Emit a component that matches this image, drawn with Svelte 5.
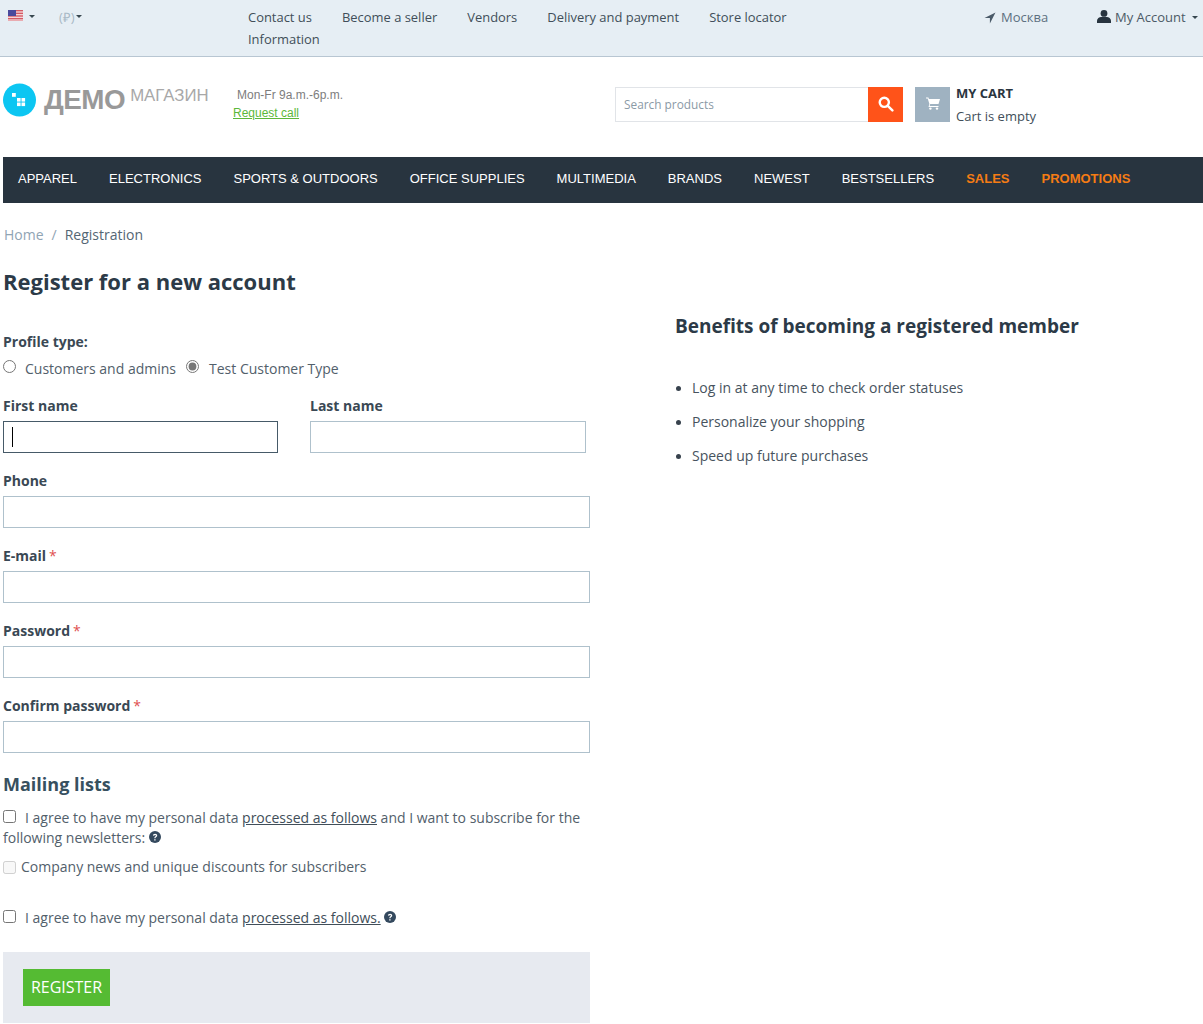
<script>
  const topLinks = ['Contact us', 'Become a seller', 'Vendors', 'Delivery and payment', 'Store locator', 'Information'];
  const nav = ['APPAREL', 'ELECTRONICS', 'SPORTS & OUTDOORS', 'OFFICE SUPPLIES', 'MULTIMEDIA', 'BRANDS', 'NEWEST', 'BESTSELLERS'];
  const navHot = ['SALES', 'PROMOTIONS'];
  const fields = [
    { label: 'Phone', req: false },
    { label: 'E-mail', req: true },
    { label: 'Password', req: true },
    { label: 'Confirm password', req: true }
  ];
  const benefits = ['Log in at any time to check order statuses', 'Personalize your shopping', 'Speed up future purchases'];
  const stripes = [0, 1, 2, 3, 4, 5, 6];
</script>

<div class="page">
  <header class="top">
    <div class="pickers">
      <span class="flag">
        <svg width="15" height="11" viewBox="0 0 15 11">
          <rect width="15" height="11" fill="#fff" />
          {#each stripes as s}<rect y={s * 1.6} width="15" height="0.8" fill="#c8313e" />{/each}
          <rect width="8" height="6" fill="#4a4a9c" />
        </svg>
      </span>
      <i class="caret"></i>
      <span class="currency">(₽)</span>
      <i class="caret small"></i>
    </div>
    <nav class="toplinks">
      {#each topLinks as l}<span>{l}</span>{/each}
    </nav>
    <div class="city">
      <svg width="12" height="12" viewBox="0 0 12 12"><path d="M11.5.5 5.9 11.5V6.1H.5z" fill="#4a5a68" /></svg>
      <span>Москва</span>
    </div>
    <div class="account">
      <svg width="14" height="13" viewBox="0 0 14 13"><circle cx="7" cy="3.4" r="3.4" fill="#28343f" /><path d="M0 13v-2.2C0 8.4 2.4 7 4 7h6c1.6 0 4 1.4 4 3.8V13z" fill="#28343f" /></svg>
      <span>My Account</span>
      <i class="caret"></i>
    </div>
  </header>

  <section class="brand">
    <div class="logo">
      <svg width="34" height="34" viewBox="0 0 34 34">
        <circle cx="16.5" cy="17" r="16.5" fill="#0cc6f2" />
        <rect x="9" y="10" width="3.8" height="3.8" fill="#fff" />
        <rect x="14" y="15" width="3.6" height="3.6" fill="#fff" />
        <rect x="18.5" y="15" width="3.6" height="3.6" fill="#fff" />
        <rect x="14" y="19.5" width="3.6" height="3.6" fill="#fff" />
        <rect x="18.5" y="19.5" width="3.6" height="3.6" fill="#fff" />
      </svg>
      <span class="demo">ДЕМО</span>
      <span class="shop">МАГАЗИН</span>
    </div>
    <div class="hours">
      <span class="time">Mon-Fr 9a.m.-6p.m.</span>
      <a href="#call" class="call">Request call</a>
    </div>
    <div class="search">
      <span class="placeholder">Search products</span>
      <button class="searchbtn" aria-label="Search">
        <svg width="16" height="16" viewBox="0 0 16 16" fill="none" stroke="#fff" stroke-width="2.4"><circle cx="6.3" cy="6.3" r="4.6" /><path d="M9.8 9.8l4.6 4.6" stroke-linecap="round" /></svg>
      </button>
    </div>
    <div class="cart">
      <span class="cartbox">
        <svg width="14" height="13" viewBox="0 0 14 13" fill="#fff">
          <path d="M0 .5h2.4l.5 1.6H14l-1.5 5H4.2L3.7 9h8.8v.9H2.5l.9-3L1.7 1.4H0z" />
          <circle cx="4.4" cy="11.6" r="1.2" /><circle cx="11" cy="11.6" r="1.2" />
        </svg>
      </span>
      <div class="carttext">
        <strong>MY CART</strong>
        <span>Cart is empty</span>
      </div>
    </div>
  </section>

  <nav class="mainnav">
    {#each nav as n}<span>{n}</span>{/each}
    {#each navHot as n}<span class="hot">{n}</span>{/each}
  </nav>

  <div class="crumbs"><span class="home">Home</span><span class="sep">/</span><span>Registration</span></div>

  <h1>Register for a new account</h1>

  <main class="columns">
    <form class="form">
      <div class="label">Profile type:</div>
      <div class="radios">
        <input type="radio" name="pt" />
        <span class="rlabel">Customers and admins</span>
        <input type="radio" name="pt" checked class="second" />
        <span class="rlabel">Test Customer Type</span>
      </div>

      <div class="names">
        <div class="name first">
          <div class="label">First name</div>
          <div class="box focus"><i class="cursor"></i></div>
        </div>
        <div class="name last">
          <div class="label">Last name</div>
          <div class="box"></div>
        </div>
      </div>

      {#each fields as f}
        <div class="field">
          <div class="label">{f.label}{#if f.req}<span class="req">*</span>{/if}</div>
          <div class="box"></div>
        </div>
      {/each}

      <h2>Mailing lists</h2>

      <p class="agree">
        <input type="checkbox" /><span class="t">I agree to have my personal data <u>processed as follows</u> and I want to subscribe for the following newsletters:</span>
        <svg class="help" width="12" height="12" viewBox="0 0 12 12"><circle cx="6" cy="6" r="6" fill="#34495e" /><path d="M3.9 4.6C4 3.4 4.9 2.7 6.1 2.7c1.2 0 2.1.7 2.1 1.8 0 1-.6 1.4-1.2 1.8-.4.3-.5.5-.5.9H5.3c0-.8.2-1.2.8-1.6.5-.3.8-.6.8-1 0-.4-.3-.7-.8-.7s-.9.3-.9.8zM5.2 8.2h1.4v1.3H5.2z" fill="#fff" /></svg>
      </p>
      <p class="news"><input type="checkbox" disabled /><span>Company news and unique discounts for subscribers</span></p>
      <p class="agree two">
        <input type="checkbox" /><span class="t">I agree to have my personal data <u>processed as follows.</u></span>
        <svg class="help" width="12" height="12" viewBox="0 0 12 12"><circle cx="6" cy="6" r="6" fill="#34495e" /><path d="M3.9 4.6C4 3.4 4.9 2.7 6.1 2.7c1.2 0 2.1.7 2.1 1.8 0 1-.6 1.4-1.2 1.8-.4.3-.5.5-.5.9H5.3c0-.8.2-1.2.8-1.6.5-.3.8-.6.8-1 0-.4-.3-.7-.8-.7s-.9.3-.9.8zM5.2 8.2h1.4v1.3H5.2z" fill="#fff" /></svg>
      </p>

      <div class="actions"><button type="button" class="register">REGISTER</button></div>
    </form>

    <aside class="benefits">
      <h3>Benefits of becoming a registered member</h3>
      <ul>
        {#each benefits as b}<li>{b}</li>{/each}
      </ul>
    </aside>
  </main>
</div>

<style>
  :global(body) { margin: 0; background: #fff; }
  .page { font-family: "Open Sans", sans-serif; font-size: 14px; color: #37474f; width: 1203px; overflow: hidden; }

  .top { height: 56px; background: #e6eef4; border-bottom: 1px solid #b8c6d2; display: flex; position: relative; }
  .pickers { width: 248px; display: flex; align-items: flex-start; padding: 10px 0 0 8px; box-sizing: border-box; }
  .flag { display: block; height: 11px; line-height: 0; }
  .caret { display: inline-block; width: 0; height: 0; border-left: 3px solid transparent; border-right: 3px solid transparent; border-top: 3px solid #37474f; margin-top: 5px; margin-left: 6px; }
  .caret.small { margin-left: 1px; margin-top: 5px; }
  .currency { font-size: 13px; color: #a9bac6; margin-left: 24px; line-height: 15px; }
  .toplinks { width: 590px; display: flex; flex-wrap: wrap; column-gap: 30px; font-size: 12.95px; line-height: 22px; padding-top: 6px; color: #414e59; align-content: flex-start; }
  .toplinks span:last-child { flex-basis: 100%; }
  .city { width: 113px; margin-left: 146px; display: flex; gap: 5px; padding-top: 11px; font-size: 13px; line-height: 13px; color: #5d7080; align-items: flex-start; box-sizing: border-box; }
  .city svg { margin-top: 1px; }
  .account { display: flex; gap: 4px; padding-top: 10px; font-size: 13px; line-height: 15px; color: #4c5a66; align-items: flex-start; white-space: nowrap; }
  .account .caret { margin-left: 2px; margin-top: 6px; }

  .brand { display: flex; height: 100px; position: relative; }
  .logo { position: relative; width: 232px; padding: 26px 0 0 3px; box-sizing: border-box; display: flex; align-items: flex-start; }
  .demo { font-family: "Liberation Sans", sans-serif; font-weight: 700; font-size: 27.8px; line-height: 32px; color: #999; margin: 1px 0 0 7px; letter-spacing: -0.5px; }
  .shop { font-family: "Liberation Sans", sans-serif; font-size: 16.8px; line-height: 20px; color: #a8a8a8; margin-left: 5px; margin-top: 3px; white-space: nowrap; }
  .hours { width: 383px; padding-top: 29px; box-sizing: border-box; display: flex; flex-direction: column; font-family: "Liberation Sans", sans-serif; font-size: 12px; line-height: 18px; }
  .time { color: #7d7d7d; margin-left: 5px; }
  .call { color: #5cb83a; text-decoration: underline; margin-left: 1px; }
  .search { margin-top: 30px; width: 288px; height: 35px; box-sizing: border-box; border: 1px solid #e1e4e8; display: flex; align-items: center; justify-content: space-between; position: relative; }
  .placeholder { font-size: 11.85px; color: #8b9aa6; margin: 0 0 2px 8px; }
  .searchbtn { width: 35px; height: 35px; margin: -1px; background: #ff5319; border: 0; padding: 0 0 2px; display: flex; align-items: center; justify-content: center; }
  .cart { display: flex; margin-left: 12px; margin-top: 30px; }
  .cartbox { width: 35px; height: 35px; box-sizing: border-box; padding-bottom: 2px; background: #9fb2c1; display: flex; align-items: center; justify-content: center; }
  .carttext { margin-left: 6px; display: flex; flex-direction: column; font-size: 13px; line-height: 23px; margin-top: -5px; color: #414e59; }
  .carttext strong { font-size: 13px; color: #2a3540; font-weight: 700; }

  .mainnav { margin-left: 3px; height: 46px; box-sizing: border-box; padding: 0 0 3px 15px; background: #28343f; display: flex; align-items: center; gap: 32px; font-family: "Liberation Sans", sans-serif; font-size: 13px; color: #fff; white-space: nowrap; }
  .hot { color: #f57c14; font-weight: 700; }

  .crumbs { display: flex; gap: 8px; margin: 22px 0 0 4px; line-height: 19px; font-size: 14px; color: #546674; }
  .home { color: #90a4b4; }
  .sep { color: #90a4b4; }

  h1 { font-size: 22px; font-weight: 700; line-height: 30px; color: #2c3a47; margin: 22px 0 0 3px; }

  .columns { display: flex; margin-left: 3px; }
  .form { width: 587px; padding-top: 36px; }
  .label { font-size: 14px; font-weight: 700; line-height: 20px; color: #3a4854; }
  .req { color: #e05050; font-weight: 400; margin-left: 3px; }
  .radios { display: flex; align-items: center; margin-top: 6px; height: 20px; color: #52606b; }
  .radios input { margin: 0 9px 3px 0; width: 13px; height: 13px; accent-color: #777; }
  .radios .second { margin: 0 10px 3px 10px; }
  .names { display: flex; gap: 32px; margin-top: 18px; }
  .name.first { width: 275px; }
  .name.last { width: 276px; }
  .box { height: 32px; box-sizing: border-box; border: 1px solid #afc1cc; background: #fff; margin-top: 5px; position: relative; }
  .box.focus { border-color: #465a68; }
  .cursor { position: absolute; left: 8px; top: 5px; width: 1px; height: 20px; background: #000; }
  .field { margin-top: 18px; }
  .field .box { margin-top: 5px; width: 587px; }

  h2 { font-size: 18px; line-height: 24px; font-weight: 700; color: #37505f; margin: 19px 0 0; }
  .agree { margin: 12px 0 0; line-height: 20px; color: #52606b; position: relative; width: 585px; font-size: 14px; }
  .agree u { color: #414e59; }
  .agree input { margin: 0 9px 0 0; width: 13px; height: 13px; vertical-align: 0; }
  .help { margin-left: 0; vertical-align: 0; }
  .news { margin: 9px 0 0; line-height: 20px; color: #52606b; display: flex; align-items: center; }
  .news input { margin: 0 5px 0 0; width: 13px; height: 13px; }
  .agree.two { margin-top: 31px; }
  .actions { margin-top: 24px; height: 71px; background: #e7eaf0; padding: 17px 0 0 20px; box-sizing: border-box; }
  .register { width: 87px; height: 37px; border: 0; padding: 0 0 2px; background: #55bb33; color: #fff; font: 16px "Open Sans", sans-serif; }

  .benefits { margin-left: 85px; padding-top: 16px; }
  h3 { font-size: 19px; line-height: 28px; font-weight: 700; color: #2c3a47; margin: 0; }
  ul { margin: 38px 0 0; padding: 0 0 0 17px; color: #47535e; list-style: none; }
  li { line-height: 20px; margin-bottom: 14px; position: relative; }
  li::before { content: ""; position: absolute; left: -16px; top: 8px; width: 5px; height: 5px; border-radius: 50%; background: #37424d; }
</style>
